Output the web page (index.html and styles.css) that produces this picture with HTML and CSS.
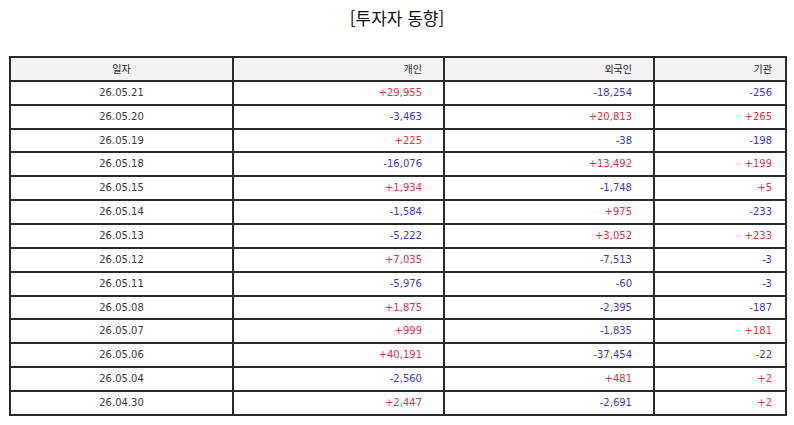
FILE: index.html
```html
<!DOCTYPE html>
<html lang="ko">
<head>
<meta charset="utf-8">
<title>투자자 동향</title>
<link rel="stylesheet" href="styles.css">
</head>
<body>
<div class="page">
  <h1 class="title">[투자자 동향]</h1>
  <table class="grid">
    <colgroup>
      <col class="c1"><col class="c2"><col class="c3"><col class="c4">
    </colgroup>
    <thead>
      <tr><th class="date">일자</th><th class="num p2">개인</th><th class="num p3">외국인</th><th class="num p4">기관</th></tr>
    </thead>
    <tbody>
      <tr><td class="date">26.05.21</td><td class="num p2 up">+29,955</td><td class="num p3 dn">-18,254</td><td class="num p4 dn">-256</td></tr>
      <tr><td class="date">26.05.20</td><td class="num p2 dn">-3,463</td><td class="num p3 up">+20,813</td><td class="num p4 up">+265</td></tr>
      <tr><td class="date">26.05.19</td><td class="num p2 up">+225</td><td class="num p3 dn">-38</td><td class="num p4 dn">-198</td></tr>
      <tr><td class="date">26.05.18</td><td class="num p2 dn">-16,076</td><td class="num p3 up">+13,492</td><td class="num p4 up">+199</td></tr>
      <tr><td class="date">26.05.15</td><td class="num p2 up">+1,934</td><td class="num p3 dn">-1,748</td><td class="num p4 up">+5</td></tr>
      <tr><td class="date">26.05.14</td><td class="num p2 dn">-1,584</td><td class="num p3 up">+975</td><td class="num p4 dn">-233</td></tr>
      <tr><td class="date">26.05.13</td><td class="num p2 dn">-5,222</td><td class="num p3 up">+3,052</td><td class="num p4 up">+233</td></tr>
      <tr><td class="date">26.05.12</td><td class="num p2 up">+7,035</td><td class="num p3 dn">-7,513</td><td class="num p4 dn">-3</td></tr>
      <tr><td class="date">26.05.11</td><td class="num p2 dn">-5,976</td><td class="num p3 dn">-60</td><td class="num p4 dn">-3</td></tr>
      <tr><td class="date">26.05.08</td><td class="num p2 up">+1,875</td><td class="num p3 dn">-2,395</td><td class="num p4 dn">-187</td></tr>
      <tr><td class="date">26.05.07</td><td class="num p2 up">+999</td><td class="num p3 dn">-1,835</td><td class="num p4 up">+181</td></tr>
      <tr><td class="date">26.05.06</td><td class="num p2 up">+40,191</td><td class="num p3 dn">-37,454</td><td class="num p4 dn">-22</td></tr>
      <tr><td class="date">26.05.04</td><td class="num p2 dn">-2,560</td><td class="num p3 up">+481</td><td class="num p4 up">+2</td></tr>
      <tr><td class="date">26.04.30</td><td class="num p2 up">+2,447</td><td class="num p3 dn">-2,691</td><td class="num p4 up">+2</td></tr>
    </tbody>
  </table>
</div>
</body>
</html>
```

FILE: styles.css
```css
html, body {
  margin: 0;
  padding: 0;
  background: #ffffff;
}

.page {
  width: 794px;
  height: 425px;
  font-family: "DejaVu Sans", "Noto Sans CJK KR", sans-serif;
  color: #383838;
}

.title {
  margin: 0;
  padding-top: 6px;
  height: 50px;
  box-sizing: border-box;
  text-align: center;
  font-weight: normal;
  font-size: 17px;
  line-height: 24px;
  color: #111111;
  font-family: "Noto Sans CJK KR", "DejaVu Sans", sans-serif;
}

.grid {
  margin-left: 9px;
  margin-top: 6px;
  width: 778px;
  border-collapse: collapse;
  table-layout: fixed;
  font-size: 10px;
}

.c1 { width: 223px; }
.c2 { width: 211px; }
.c3 { width: 210px; }
.c4 { width: 132px; }

.grid th,
.grid td {
  border: 2px solid #2a2a2a;
  height: 21.87px;
  padding: 0;
  font-weight: normal;
  white-space: nowrap;
  line-height: 12px;
}

.grid th {
  background: #f2f2f2;
  font-family: "Noto Sans CJK KR", "DejaVu Sans", sans-serif;
  color: #222222;
}

.date { text-align: center; }
.num { text-align: right; }
.p2, .p3 { padding-right: 21px !important; }
.p4 { padding-right: 13px !important; }

.up { color: #e0303a; }
.dn { color: #3838cc; }
```
